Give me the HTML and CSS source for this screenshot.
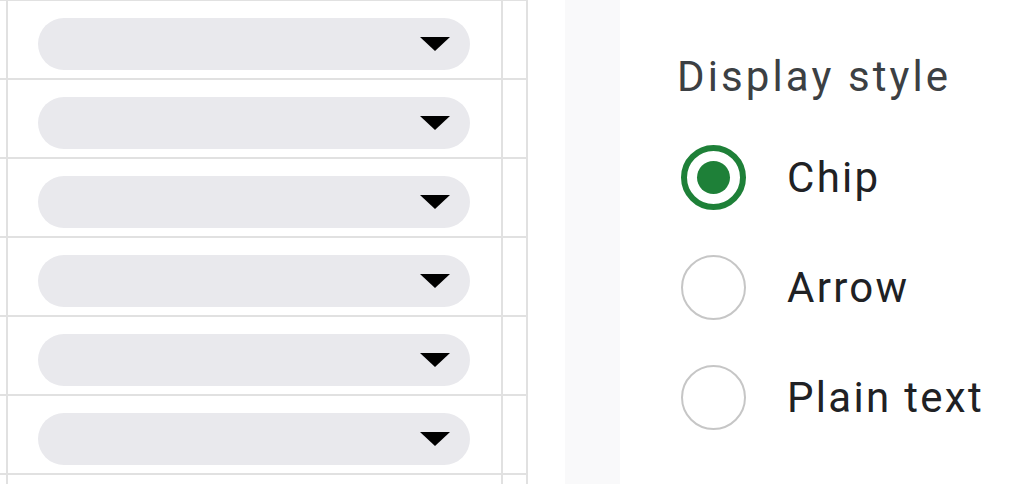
FILE: index.html
```html
<!DOCTYPE html>
<html lang="en">
<head>
    <meta charset="UTF-8">
    <meta name="viewport" content="width=device-width, initial-scale=1.0">
    <title>Dropdown display style</title>
    <link rel="stylesheet" href="styles.css">
</head>
<body>
    <div class="page">
        <div class="sheet">
            <div class="row"><div class="cell edge"></div><div class="cell main"><div class="chip"><span class="caret"></span></div></div><div class="cell narrow"></div></div>
            <div class="row"><div class="cell edge"></div><div class="cell main"><div class="chip"><span class="caret"></span></div></div><div class="cell narrow"></div></div>
            <div class="row"><div class="cell edge"></div><div class="cell main"><div class="chip"><span class="caret"></span></div></div><div class="cell narrow"></div></div>
            <div class="row"><div class="cell edge"></div><div class="cell main"><div class="chip"><span class="caret"></span></div></div><div class="cell narrow"></div></div>
            <div class="row"><div class="cell edge"></div><div class="cell main"><div class="chip"><span class="caret"></span></div></div><div class="cell narrow"></div></div>
            <div class="row"><div class="cell edge"></div><div class="cell main"><div class="chip"><span class="caret"></span></div></div><div class="cell narrow"></div></div>
            <div class="row"><div class="cell edge"></div><div class="cell main"></div><div class="cell narrow"></div></div>
        </div>

        <div class="gutter"></div>
        <div class="divider"></div>

        <div class="panel">
            <h2 class="panel-title">Display style</h2>
            <div class="options">
                <label class="option">
                    <span class="radio checked"></span>
                    <span class="option-label">Chip</span>
                </label>
                <label class="option">
                    <span class="radio"></span>
                    <span class="option-label">Arrow</span>
                </label>
                <label class="option">
                    <span class="radio"></span>
                    <span class="option-label">Plain text</span>
                </label>
            </div>
        </div>
    </div>
</body>
</html>
```

FILE: styles.css
```css
body {
    margin: 0;
    font-family: Roboto, "Liberation Sans", sans-serif;
    background: #fff;
    overflow: hidden;
}

.page {
    display: flex;
    height: 484px;
    overflow: hidden;
}

/* spreadsheet grid */
.sheet {
    width: 528px;
    margin-top: -1px;
    flex-shrink: 0;
}

.row {
    display: flex;
    height: 77px;
    border-top: 2px solid #e1e1e1;
}

.cell {
    border-right: 2px solid #e1e1e1;
}

.edge {
    width: 6px;
}

.main {
    width: 495px;
    padding: 17px 0 0 30px;
    box-sizing: border-box;
}

.narrow {
    width: 23px;
}

.chip {
    width: 432px;
    height: 52px;
    border-radius: 26px;
    background: #e9e9ed;
    display: flex;
    align-items: center;
    justify-content: flex-end;
    padding-right: 20px;
    box-sizing: border-box;
}

.caret {
    width: 0;
    height: 0;
    margin-top: -1px;
    border-left: 15px solid transparent;
    border-right: 15px solid transparent;
    border-top: 14px solid #000;
}

.gutter {
    width: 37px;
}

.divider {
    width: 55px;
    background: #f9f9fa;
}

/* side panel */
.panel {
    flex: 1;
    padding: 52px 0 0 57px;
}

.panel-title {
    margin: 0;
    font-size: 42px;
    font-weight: 400;
    line-height: 50px;
    letter-spacing: 3.1px;
    color: #3c4043;
}

.options {
    padding: 20px 0 0 4px;
}

.option {
    display: flex;
    align-items: center;
    height: 110px;
}

.radio {
    width: 65px;
    height: 65px;
    border-radius: 50%;
    border: 2.5px solid #c6c6c6;
    box-sizing: border-box;
    flex-shrink: 0;
    display: flex;
    align-items: center;
    justify-content: center;
}

.radio.checked {
    border: 6px solid #1e8038;
}

.radio.checked::after {
    content: "";
    width: 33px;
    height: 33px;
    border-radius: 50%;
    background: #1e8038;
}

.option-label {
    margin-left: 41px;
    font-size: 42px;
    letter-spacing: 2.3px;
    color: #202124;
}
```
